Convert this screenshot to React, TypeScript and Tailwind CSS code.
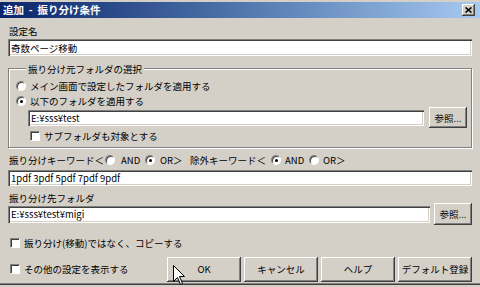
import React from "react";

const raised =
  "shadow-[inset_-1px_-1px_#404040,inset_1px_1px_#ffffff,inset_-2px_-2px_#808080,inset_2px_2px_#d4d0c8]";
const sunken =
  "shadow-[inset_1px_1px_#808080,inset_2px_2px_#404040,inset_-1px_-1px_#ffffff,inset_-2px_-2px_#d4d0c8]";

function Radio({ checked }: { checked?: boolean }) {
  return (
    <span className="inline-flex h-[10px] w-[10px] shrink-0 items-center justify-center rounded-full border border-t-[#808080] border-l-[#808080] border-b-white border-r-white bg-white shadow-[inset_1px_1px_#404040]">
      {checked && <span className="h-[3px] w-[3px] rounded-full bg-black" />}
    </span>
  );
}

function Check() {
  return (
    <span className="inline-block h-[10px] w-[10px] shrink-0 border border-t-[#808080] border-l-[#808080] border-b-white border-r-white bg-white shadow-[inset_1px_1px_#404040]" />
  );
}

function Btn({ label, w = "w-[74px]", h = "h-[25px]" }: { label: string; w?: string; h?: string }) {
  return (
    <button type="button" className={`${w} ${h} shrink-0 bg-[#d4d0c8] ${raised} text-[9.5px] leading-[12px]`}>
      {label}
    </button>
  );
}

function Field({ value, className }: { value: string; className: string }) {
  return (
    <input
      readOnly
      value={value}
      className={`${className} bg-white pl-[3px] outline-none ${sunken} text-[9.5px]`}
    />
  );
}

export default function App() {
  return (
    <div className="relative flex h-[287px] w-[480px] flex-col overflow-hidden bg-[#d4d0c8] pt-[2px] font-['Noto_Sans_CJK_JP',sans-serif] text-[9.5px] leading-[12px] text-black">
      {/* title bar */}
      <div className="flex h-[16px] shrink-0 items-center bg-linear-to-r from-[#0a246a] to-[#a6caf0] pl-[3px] pr-[5px]">
        <span className="whitespace-pre text-[10.5px] font-bold text-white">追加  -  振り分け条件</span>
        <span className={`ml-auto flex h-[12px] w-[13px] items-center justify-center bg-[#d4d0c8] ${raised}`}>
          <svg width="7" height="6" viewBox="0 0 7 6">
            <path d="M0.5 0.5 L6.5 5.5 M6.5 0.5 L0.5 5.5" stroke="#000" strokeWidth="1.6" />
          </svg>
        </span>
      </div>

      <div className="flex flex-col px-[8px]">
        <div className="mt-[7px] h-[12px] pl-[1px]">設定名</div>
        <Field value="奇数ページ移動" className="mt-[2px] h-[17px] w-full" />

        {/* source folder group */}
        <div className="mt-[12px] border border-[#808080] pb-[5px] pl-[7px] pr-[4px] shadow-[1px_1px_0_#ffffff,inset_1px_1px_0_#ffffff]">
          <div className="-mt-[6px] ml-[10px] h-[12px] w-fit bg-[#d4d0c8] px-[2px]">振り分け元フォルダの選択</div>
          <div className="mt-[5px] flex h-[12px] items-center">
            <Radio />
            <span className="ml-[4px]">メイン画面で設定したフォルダを適用する</span>
          </div>
          <div className="mt-[3px] flex h-[12px] items-center">
            <Radio checked />
            <span className="ml-[4px]">以下のフォルダを適用する</span>
          </div>
          <div className="flex h-[21px] items-center">
            <Field value="E:¥sss¥test" className="ml-[12px] h-[16px] flex-1" />
            <span className="ml-[5px]">
              <Btn label="参照..." w="w-[38px]" h="h-[21px]" />
            </span>
          </div>
          <div className="mt-[2px] flex h-[12px] items-center pl-[14px]">
            <Check />
            <span className="ml-[4px]">サブフォルダも対象とする</span>
          </div>
        </div>

        {/* keywords */}
        <div className="mt-[6px] flex h-[12px] items-center pl-[1px]">
          <span className="w-[96px] shrink-0">振り分けキーワード＜</span>
          <Radio />
          <span className="ml-[6px] w-[24px] shrink-0">AND</span>
          <Radio checked />
          <span className="ml-[5px] w-[30px] shrink-0">OR＞</span>
          <span className="w-[81px] shrink-0">除外キーワード＜</span>
          <Radio checked />
          <span className="ml-[4px] w-[24px] shrink-0">AND</span>
          <Radio />
          <span className="ml-[4px]">OR＞</span>
        </div>
        <Field value="1pdf 3pdf 5pdf 7pdf 9pdf" className="mt-[4px] h-[16px] w-full" />

        <div className="mt-[6px] h-[11px] pl-[1px]">振り分け先フォルダ</div>
        <div className="flex h-[22px] items-center">
          <Field value="E:¥sss¥test¥migi" className="h-[17px] flex-1" />
          <span className="ml-[4px]">
            <Btn label="参照..." w="w-[38px]" h="h-[22px]" />
          </span>
        </div>

        <div className="mt-[12px] flex h-[12px] items-center pl-[2px]">
          <Check />
          <span className="ml-[4px]">振り分け(移動)ではなく、コピーする</span>
        </div>

        <div className="mt-[7px] flex h-[26px] items-center pl-[2px]">
          <Check />
          <span className="ml-[4px]">その他の設定を表示する</span>
          <div className="ml-auto flex gap-[3px]">
            <Btn label="OK" />
            <Btn label="キャンセル" />
            <Btn label="ヘルプ" />
            <Btn label="デフォルト登録" />
          </div>
        </div>
      </div>
      <div className="mt-[1px] h-[1px] bg-[#808080]" />
      <div className="h-[1px] bg-[#404040]" />

      {/* mouse pointer */}
      <svg className="absolute left-[173px] top-[265px]" width="13" height="21" viewBox="0 0 13 21">
        <path d="M0.5 0.5 L0.5 16.5 L4.5 12.5 L7.5 19.5 L9.5 18.5 L6.5 11.5 L11.5 11.5 Z" fill="#fff" stroke="#000" strokeWidth="1" />
      </svg>
    </div>
  );
}
